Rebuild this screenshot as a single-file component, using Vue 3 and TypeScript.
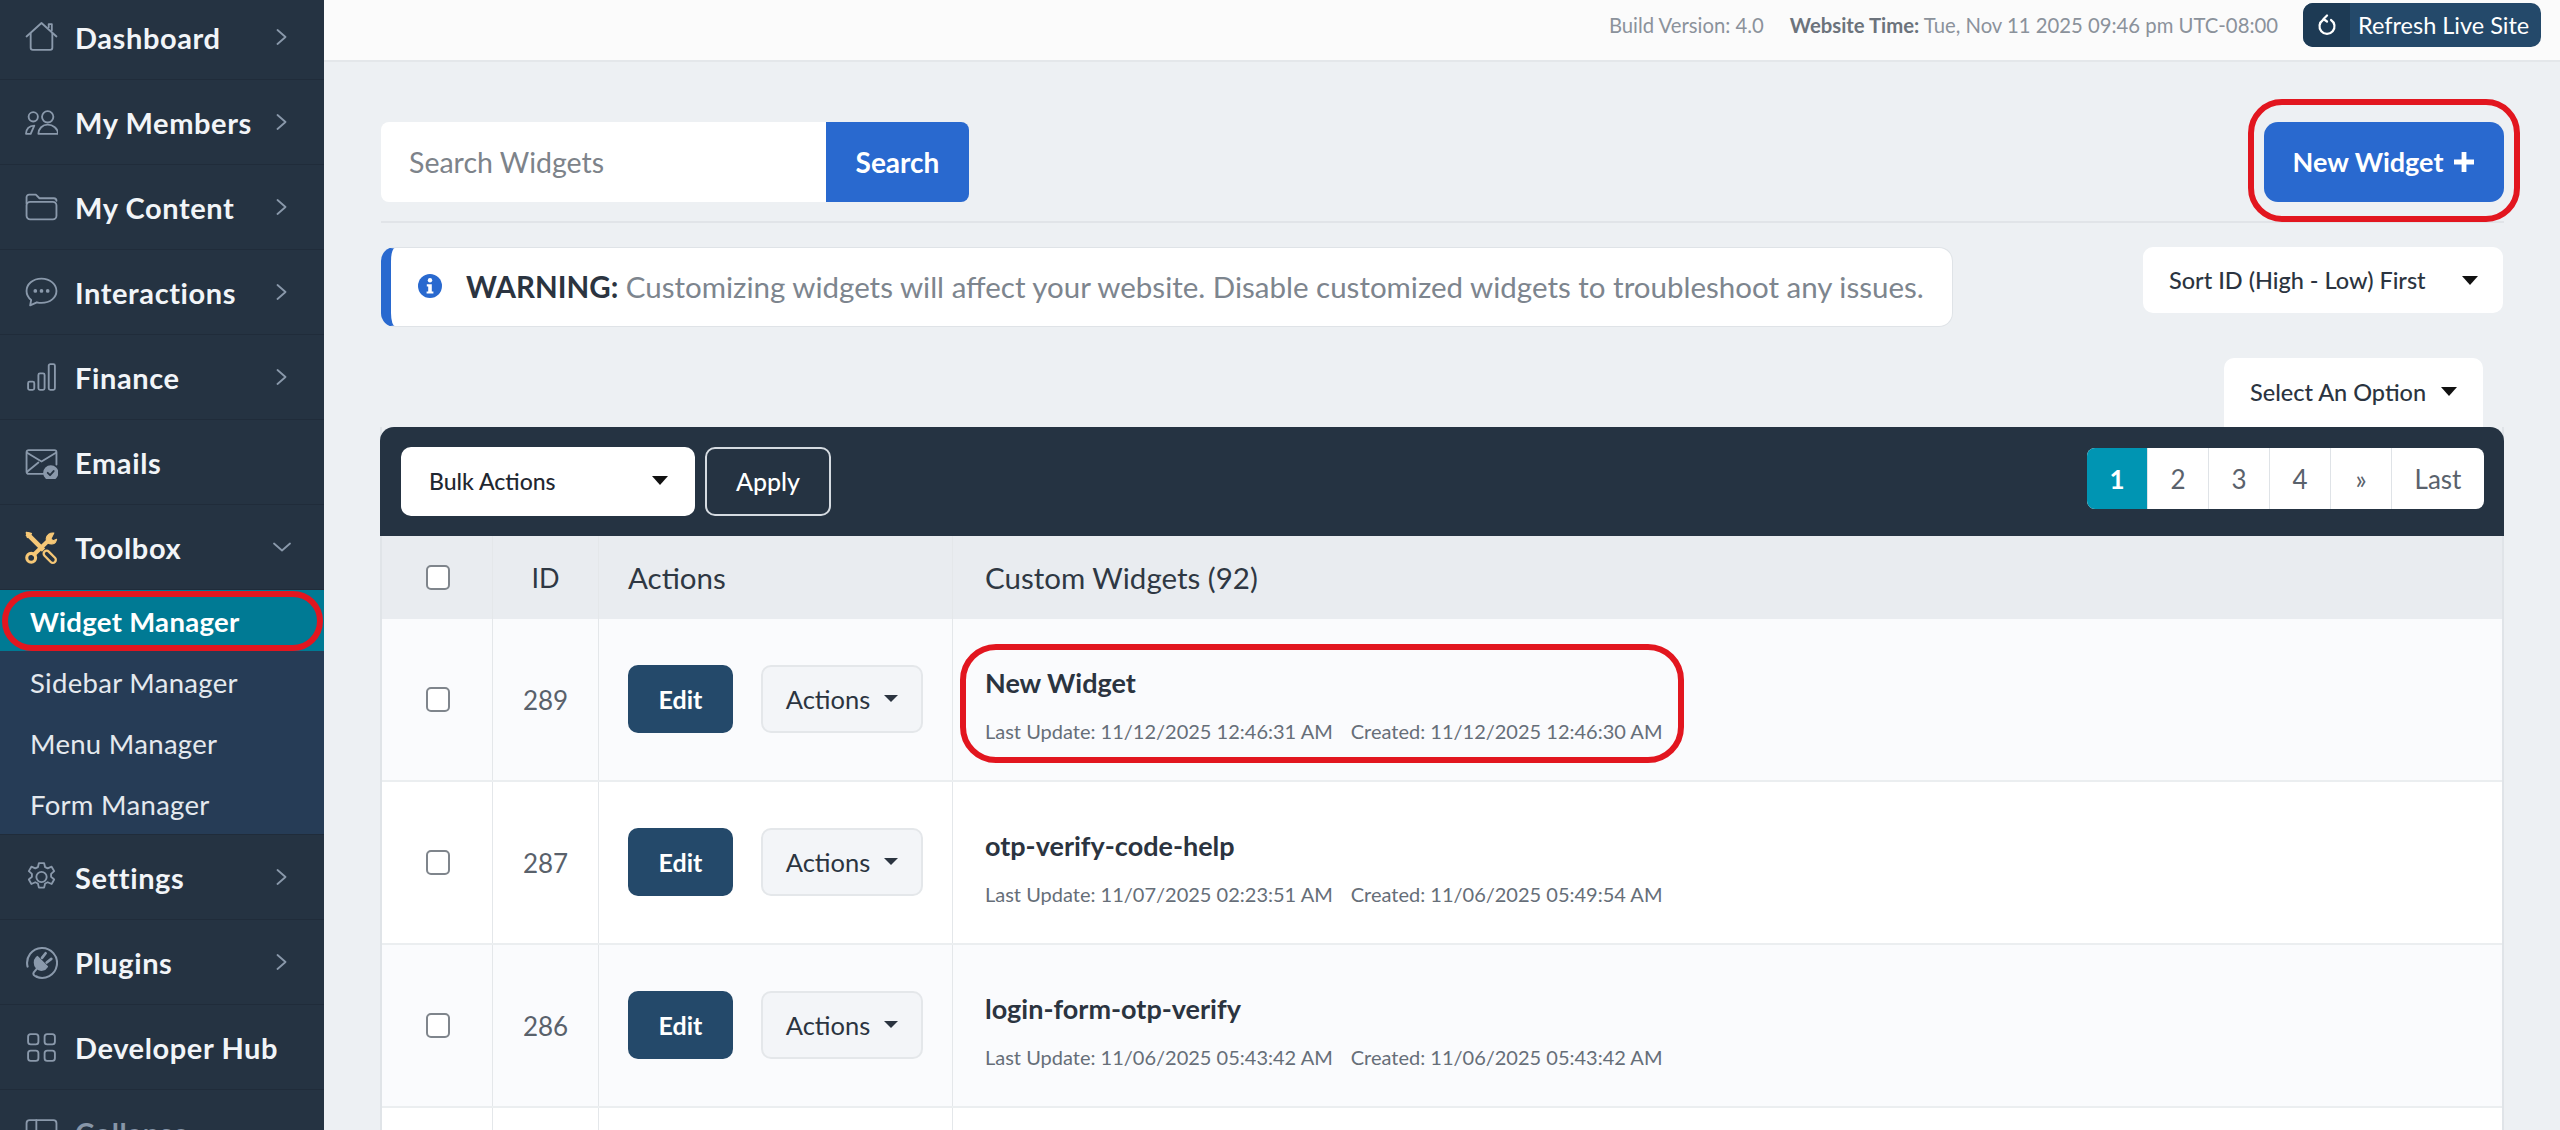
<template>
  <div class="page">
    <aside class="sidebar">
      <template v-for="item in navItems" :key="item.label">
        <div class="nav-item" :class="{ open: item.open, dim: item.dim }">
          <svg class="nav-icon" :class="{ accent: item.open }" viewBox="0 0 32 32" fill="none" stroke="currentColor" stroke-width="1.8" stroke-linecap="round" stroke-linejoin="round">
            <g v-html="item.icon"></g>
          </svg>
          <span class="nav-label">{{ item.label }}</span>
          <svg v-if="item.open" class="chev down" viewBox="0 0 18 10" fill="none" stroke="currentColor" stroke-width="1.8" stroke-linecap="round" stroke-linejoin="round">
            <path d="M1 1.5l8 7 8-7" />
          </svg>
          <svg v-else-if="item.arrow" class="chev" viewBox="0 0 11 16" fill="none" stroke="currentColor" stroke-width="1.8" stroke-linecap="round" stroke-linejoin="round">
            <path d="M1.5 1l8 7-8 7" />
          </svg>
        </div>
        <div v-if="item.open" class="submenu">
          <div class="sub-item active">
            Widget Manager
            <span class="ring ring-nav"></span>
          </div>
          <div class="sub-item">Sidebar Manager</div>
          <div class="sub-item">Menu Manager</div>
          <div class="sub-item">Form Manager</div>
        </div>
      </template>
    </aside>

    <main class="main">
      <header class="topbar">
        <span class="top-text">Build Version: 4.0</span>
        <span class="top-text"><b>Website Time:</b> Tue, Nov 11 2025 09:46 pm UTC-08:00</span>
        <button class="refresh">
          <span class="refresh-icon">
            <svg width="20" height="22" viewBox="0 0 20 22" fill="none" stroke="#fff" stroke-width="2.2" stroke-linecap="round">
              <path d="M6 6a7.5 7.5 0 1 0 8 0" />
              <path d="M10 1.5L6.5 5l3.5 2.5" stroke-linejoin="round" />
            </svg>
          </span>
          <span class="refresh-label">Refresh Live Site</span>
        </button>
      </header>

      <section class="content">
        <div class="search-row">
          <div class="search">
            <input class="search-input" type="text" placeholder="Search Widgets" />
            <button class="search-btn">Search</button>
          </div>
          <button class="new-btn">
            New Widget
            <svg width="22" height="22" viewBox="0 0 22 22" fill="#fff"><path d="M8.6 1h4.8v7.6H21v4.8h-7.6V21H8.6v-7.6H1V8.6h7.6z" /></svg>
            <span class="ring ring-new"></span>
          </button>
        </div>

        <div class="notice-row">
          <div class="notice">
            <svg width="24" height="24" viewBox="0 0 24 24"><circle cx="12" cy="12" r="12" fill="#2969cf" /><circle cx="12" cy="6.2" r="2.2" fill="#fff" /><path d="M8.8 10.2h5v7.2h1.6v2.2H8.6v-2.2h1.6v-5H8.8z" fill="#fff" /></svg>
            <p class="notice-text"><b>WARNING:</b> Customizing widgets will affect your website. Disable customized widgets to troubleshoot any issues.</p>
          </div>
          <div class="dropdown sort">Sort ID (High - Low) First <i class="caret"></i></div>
        </div>

        <div class="option-row">
          <div class="dropdown option">Select An Option <i class="caret"></i></div>
        </div>

        <div class="panel">
          <div class="toolbar">
            <div class="bulk">Bulk Actions <i class="caret"></i></div>
            <button class="apply">Apply</button>
            <nav class="pager">
              <span v-for="(p, i) in pages" :key="p" class="page-link" :class="{ current: i === 0 }">{{ p }}</span>
            </nav>
          </div>

          <div class="grid-row head">
            <div class="cell center"><input type="checkbox" class="check" /></div>
            <div class="cell center id-head">ID</div>
            <div class="cell pad">Actions</div>
            <div class="cell pad wide">Custom Widgets (92)</div>
          </div>

          <div v-for="(w, i) in widgets" :key="w.id" class="grid-row body" :class="{ odd: i % 2 === 0 }">
            <div class="cell center"><input type="checkbox" class="check" /></div>
            <div class="cell center id">{{ w.id }}</div>
            <div class="cell pad actions">
              <button class="edit">Edit</button>
              <button class="more">Actions <i class="caret small"></i></button>
            </div>
            <div class="cell pad wide info">
              <div class="title">{{ w.title }}</div>
              <div class="meta">
                <span>Last Update: {{ w.updated }}</span>
                <span>Created: {{ w.created }}</span>
              </div>
              <span v-if="i === 0" class="ring ring-row"></span>
            </div>
          </div>

          <div class="grid-row body tail">
            <div class="cell"></div>
            <div class="cell"></div>
            <div class="cell"></div>
            <div class="cell"></div>
          </div>
        </div>
      </section>
    </main>
  </div>
</template>

<script setup lang="ts">
interface NavItem {
  label: string
  icon: string
  arrow?: boolean
  open?: boolean
  dim?: boolean
}

const navItems: NavItem[] = [
  { label: 'Dashboard', arrow: true, icon: '<path d="M1.5 15L16 2l14.5 13"/><path d="M5.5 12v14a2 2 0 0 0 2 2h17a2 2 0 0 0 2-2V12"/><path d="M23 6V3h3v6"/>' },
  { label: 'My Members', arrow: true, icon: '<circle cx="8" cy="10.5" r="4.5"/><circle cx="22" cy="10.5" r="5.5"/><path d="M13 27c0-5 4-9 9-9s10 4 10 9z"/><path d="M1 27c0-4.5 3-8 8-8l-3.5 8z"/>' },
  { label: 'My Content', arrow: true, icon: '<path d="M1.5 12V6A2.5 2.5 0 0 1 4 3.5h6.500l3.500 3.500h14a2.500 2.500 0 0 1 2.500 2.500"/><rect x="1.5" y="10.5" width="29" height="17" rx="3.5"/>' },
  { label: 'Interactions', arrow: true, icon: '<path d="M16 2.5C7.5 2.5 1.5 8 1.5 14.5c0 3.500 1.700 6.500 4.500 8.700l-1 5.300 6.500-3c1.500.4 3 .6 4.500.6 8.500 0 14.500-5.300 14.500-11.600S24.500 2.500 16 2.500z"/><circle cx="10" cy="14.5" r=".9" fill="currentColor"/><circle cx="16" cy="14.5" r=".9" fill="currentColor"/><circle cx="22" cy="14.5" r=".9" fill="currentColor"/>' },
  { label: 'Finance', arrow: true, icon: '<rect x="3" y="20" width="6" height="8" rx="1.5"/><rect x="13" y="12" width="6" height="16" rx="1.5"/><rect x="23" y="3" width="6" height="25" rx="1.5"/>' },
  { label: 'Emails', icon: '<path d="M18 27H3.5a2 2 0 0 1-2-2V6a2 2 0 0 1 2-2h25a2 2 0 0 1 2 2v12"/><path d="M2 6.5L16 15 30 6.5"/><path d="M2 25l11-9"/><circle cx="25" cy="26" r="6.5" fill="currentColor"/><path d="M22 26l2.300 2.300 3.500-4" stroke="#253342"/>' },
  { label: 'Toolbox', open: true, icon: '<path d="M2 2.5L18 18.5" stroke-width="4.5" stroke-linecap="butt"/><path d="M1.5 1.5l4.500 1-3.500 3.500z" fill="currentColor"/><path d="M21 22l6 6" stroke-width="8"/><path d="M21 22l6 6" stroke-width="3.5" stroke="#253342"/><path d="M9 22.5L22 10" stroke-width="4"/><circle cx="6" cy="26" r="4.3" stroke-width="3"/><path d="M28 2a6.500 6.500 0 0 0-7.500 5.500c0 2 .8 3.500 2 4.500 2 1 5.500 1 7-1 .7-1 1-2 1.200-3l-3.500 1.500-2-2z" fill="currentColor" stroke-width="1"/>' },
  { label: 'Settings', arrow: true, icon: '<circle cx="16" cy="15.5" r="5"/><path d="M13.5 2h5l1 4 2.500 1.200 3.800-1.700 2.500 4.300-3 2.700v2.800l3 2.700-2.500 4.300-3.800-1.700-2.500 1.200-1 4h-5l-1-4-2.500-1.200-3.800 1.700-2.500-4.300 3-2.700v-2.800l-3-2.700 2.500-4.300 3.800 1.700 2.500-1.200z"/>' },
  { label: 'Plugins', arrow: true, icon: '<path d="M2.5 20A14.5 14.5 0 1 1 11 29.8" stroke-width="2"/><path d="M12 10.5l9.500 9.500c-2 3.500-7 4.500-10 1.500s-2.500-8-.5-10z" fill="currentColor"/><path d="M16.5 11.5l3.500-4.500M21 16l4.500-3.500" stroke-width="2.6"/><path d="M11.5 22l-3 3.500c-1 1.800 0 3.800 3 4" stroke-width="2"/>' },
  { label: 'Developer Hub', icon: '<rect x="3" y="3" width="10" height="10" rx="2.5"/><rect x="19" y="3" width="10" height="10" rx="2.5"/><rect x="3" y="19" width="10" height="10" rx="2.5"/><rect x="19" y="19" width="10" height="10" rx="2.5"/>' },
  { label: 'Collapse', dim: true, icon: '<rect x="1.5" y="4" width="29" height="24" rx="3"/><path d="M11 4v24"/>' }
]

const pages = ['1', '2', '3', '4', '»', 'Last']

const widgets = [
  { id: 289, title: 'New Widget', updated: '11/12/2025 12:46:31 AM', created: '11/12/2025 12:46:30 AM' },
  { id: 287, title: 'otp-verify-code-help', updated: '11/07/2025 02:23:51 AM', created: '11/06/2025 05:49:54 AM' },
  { id: 286, title: 'login-form-otp-verify', updated: '11/06/2025 05:43:42 AM', created: '11/06/2025 05:43:42 AM' }
]
</script>

<style>
html,
body {
  margin: 0;
  background: #edf0f3;
}
</style>

<style scoped>
* {
  box-sizing: border-box;
}

.page {
  display: flex;
  width: 2560px;
  height: 1130px;
  overflow: hidden;
  font-family: Lato, "Open Sans", sans-serif;
  color: #2b3440;
  background: #edf0f3;
}

button {
  font-family: inherit;
  border: none;
  cursor: pointer;
}

.sidebar {
  flex: 0 0 324px;
  height: 1135px;
  margin-top: -5px;
  background: #253342;
}

.nav-item {
  display: flex;
  align-items: center;
  height: 85px;
  padding-left: 25px;
  border-bottom: 1px solid #202c3a;
  color: #fff;
}

.nav-icon {
  flex: 0 0 33px;
  width: 33px;
  height: 33px;
  margin-right: 17px;
  color: #8a99ab;
}

.nav-icon.accent {
  color: #f6c877;
}

.nav-label {
  font-size: 29px;
  font-weight: 700;
  letter-spacing: 0.6px;
  color: #f2f5f8;
}

.nav-item.dim .nav-label {
  color: #8796a8;
}

.chev {
  width: 11px;
  height: 16px;
  margin-left: auto;
  margin-right: 37px;
  color: #8a99ab;
}

.chev.down {
  width: 18px;
  height: 10px;
  margin-right: 33px;
}

.submenu {
  background: #263c56;
  border-bottom: 1px solid #202c3a;
}

.sub-item {
  position: relative;
  display: flex;
  align-items: center;
  height: 61px;
  padding: 2px 0 0 30px;
  font-size: 27.5px;
  letter-spacing: 0.3px;
  color: #e4e9ee;
}

.sub-item.active {
  font-weight: 700;
  color: #fff;
  background: #007a94;
}

.ring {
  position: absolute;
  border: 6px solid #e2161f;
  pointer-events: none;
}

.ring-nav {
  left: 2px;
  right: 1px;
  top: 1px;
  bottom: 0;
  border-radius: 30px;
}

.main {
  flex: 1;
  min-width: 0;
}

.topbar {
  display: flex;
  align-items: center;
  justify-content: flex-end;
  gap: 26px;
  height: 62px;
  padding: 0 19px 10px 0;
  background: #fbfbfb;
  border-bottom: 2px solid #e4e7ea;
}

.top-text {
  font-size: 20.3px;
  color: #8b929b;
}

.top-text b {
  color: #6c737c;
}

.refresh {
  display: flex;
  align-items: stretch;
  width: 238px;
  height: 44px;
  padding: 0;
  margin-left: -1px;
  overflow: hidden;
  border-radius: 10px;
  background: #24496a;
  color: #fff;
  font-size: 23.5px;
}

.refresh-icon {
  display: flex;
  align-items: center;
  justify-content: center;
  width: 47px;
  background: #1d3a54;
}

.refresh-label {
  flex: 1;
  align-self: center;
  padding-left: 8px;
  text-align: left;
}

.content {
  padding: 60px 56px 0 57px;
}

.search-row {
  display: flex;
  justify-content: space-between;
  height: 101px;
  border-bottom: 2px solid #e1e4e8;
}

.search {
  display: flex;
  height: 80px;
}

.search-input {
  width: 445px;
  height: 80px;
  padding: 0 28px;
  border: none;
  outline: none;
  border-radius: 8px 0 0 8px;
  background: #fff;
  font: 28.5px Lato, sans-serif;
}

.search-input::placeholder {
  color: #7d838a;
}

.search-btn {
  width: 143px;
  border-radius: 0 8px 8px 0;
  background: #2969cf;
  color: #fff;
  font-size: 28px;
  font-weight: 700;
}

.new-btn {
  position: relative;
  display: flex;
  align-items: center;
  justify-content: center;
  gap: 10px;
  width: 240px;
  height: 80px;
  padding-bottom: 2px;
  border-radius: 14px;
  background: #2969cf;
  color: #fff;
  font-size: 27px;
  font-weight: 700;
}

.ring-new {
  left: -16px;
  right: -16px;
  top: -23px;
  bottom: -20px;
  border-radius: 34px;
}

.notice-row {
  display: flex;
  justify-content: space-between;
  align-items: flex-start;
  margin-top: 24px;
}

.notice {
  display: flex;
  align-items: center;
  width: 1572px;
  height: 80px;
  padding: 0 0 2px 27px;
  border: 1px solid #dfe3e7;
  border-left: 10px solid #2969cf;
  border-radius: 14px;
  background: #fff;
}

.notice-text {
  margin: 0 0 0 24px;
  font-size: 29.5px;
  color: #7d858e;
  white-space: nowrap;
}

.notice-text b {
  color: #2b3440;
}

.dropdown {
  display: flex;
  align-items: center;
  justify-content: space-between;
  border-radius: 10px;
  background: #fff;
  font-size: 23.5px;
  font-weight: 500;
  color: #2b3440;
}

.sort {
  width: 360px;
  height: 66px;
  padding: 0 25px 0 26px;
  margin-right: 1px;
}

.caret {
  display: inline-block;
  width: 0;
  height: 0;
  border-left: 8px solid transparent;
  border-right: 8px solid transparent;
  border-top: 9px solid #111;
}

.caret.small {
  border-left-width: 7px;
  border-right-width: 7px;
  border-top-width: 7px;
  border-top-color: #2b3440;
}

.option-row {
  display: flex;
  justify-content: flex-end;
  margin-top: 31px;
  padding-right: 21px;
}

.option {
  width: 259px;
  height: 69px;
  padding: 0 26px 2px;
  border-radius: 10px 10px 0 0;
}

.panel {
  margin-left: -1px;
  border-left: 2px solid #e0e4e8;
  border-right: 2px solid #e0e4e8;
}

.toolbar {
  display: flex;
  align-items: center;
  height: 109px;
  padding: 0 20px 0 21px;
  margin: 0 -2px;
  border-radius: 14px 14px 0 0;
  background: #253342;
}

.bulk {
  display: flex;
  align-items: center;
  justify-content: space-between;
  width: 294px;
  height: 69px;
  padding: 0 27px 2px 28px;
  border-radius: 10px;
  background: #fff;
  font-size: 23px;
  font-weight: 500;
  color: #1f2730;
}

.apply {
  width: 126px;
  height: 69px;
  margin-left: 10px;
  padding-bottom: 2px;
  border: 2px solid #d5dbe1;
  border-radius: 10px;
  background: transparent;
  color: #fff;
  font-size: 25px;
  font-weight: 500;
}

.pager {
  display: flex;
  height: 61px;
  margin: 0 0 6px auto;
  overflow: hidden;
  border-radius: 8px;
  background: #fff;
}

.page-link {
  display: flex;
  align-items: center;
  justify-content: center;
  width: 61px;
  border-left: 1px solid #dfe3e7;
  font-size: 26px;
  color: #5a626c;
}

.page-link:last-child {
  width: 93px;
}

.page-link.current {
  width: 60px;
  border-left: none;
  background: #0095b3;
  color: #fff;
  font-weight: 700;
}

.grid-row {
  display: grid;
  grid-template-columns: 110px 106px 354px 1fr;
}

.cell {
  display: flex;
  align-items: center;
  min-width: 0;
  border-left: 1px solid #e4e7ea;
}

.cell:first-child {
  border-left: none;
}

.center {
  justify-content: center;
}

.pad {
  padding-left: 29px;
}

.pad.wide {
  padding-left: 32px;
}

.head {
  height: 83px;
  background: #e9ecf0;
  font-size: 29.5px;
  color: #2f3843;
}

.id-head {
  font-size: 27px;
}

.body {
  height: 163px;
  border-bottom: 2px solid #ebeef0;
  background: #fff;
}

.body.odd {
  background: #fafbfd;
}

.tail {
  height: 40px;
}

.check {
  appearance: none;
  width: 24px;
  height: 25px;
  margin: 0 0 0 1px;
  border: 2px solid #7f858c;
  border-radius: 5px;
  background: #fff;
}

.id {
  font-size: 26px;
  color: #59616b;
}

.actions {
  gap: 28px;
  padding-bottom: 2px;
}

.edit {
  width: 105px;
  height: 68px;
  border-radius: 10px;
  background: #24496a;
  color: #fff;
  font-size: 25px;
  font-weight: 700;
}

.more {
  display: flex;
  align-items: center;
  justify-content: center;
  gap: 14px;
  width: 162px;
  height: 68px;
  border: 2px solid #e4e7ea;
  border-radius: 10px;
  background: #f3f5f8;
  color: #2b3440;
  font-size: 25.5px;
}

.info {
  position: relative;
  flex-direction: column;
  align-items: flex-start;
  justify-content: center;
}

.title {
  margin-top: 9px;
  font-size: 27px;
  font-weight: 700;
  color: #2b3440;
}

.meta {
  display: flex;
  gap: 18px;
  margin-top: 20px;
  font-size: 20px;
  color: #666e78;
}

.ring-row {
  left: 7px;
  top: 25px;
  width: 724px;
  height: 119px;
  border-radius: 36px;
}
</style>
